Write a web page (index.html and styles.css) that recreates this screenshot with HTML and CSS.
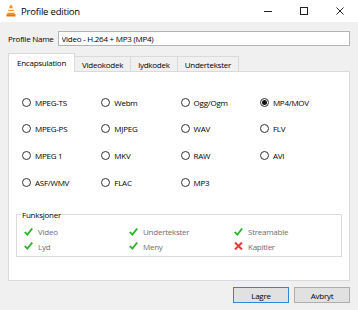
FILE: index.html
```html
<!DOCTYPE html>
<html lang="no">
<head>
    <meta charset="UTF-8">
    <title>Profile edition</title>
    <link rel="stylesheet" href="styles.css">
</head>
<body>
    <div class="titlebar">
        <svg class="app-icon" viewBox="0 0 10 12">
            <path d="M4 0.3h2l3 9.2h-8z" fill="#f7931e"/>
            <path d="M3.1 3.2h3.8l0.6 1.8h-5z M2.2 6h5.6l0.6 1.8h-6.8z" fill="#fff"/>
            <path d="M0.3 9.2h9.4l-0.4 2.4h-8.6z" fill="#e8730c"/>
        </svg>
        <span class="title">Profile edition</span>
        <div class="controls">
            <span class="ctl"><svg width="8" height="8"><path d="M0 4.5H8" stroke="#222"/></svg></span>
            <span class="ctl"><svg width="8" height="8"><rect x="0.5" y="0.5" width="7" height="7" fill="none" stroke="#222"/></svg></span>
            <span class="ctl"><svg width="8" height="8"><path d="M0.5 0.5L7.5 7.5M7.5 0.5L0.5 7.5" stroke="#222"/></svg></span>
        </div>
    </div>

    <div class="content">
        <div class="name-row">
            <label for="profile-name">Profile Name</label>
            <input id="profile-name" class="name-input" type="text" value="Video - H.264 + MP3 (MP4)">
        </div>

        <div class="tab-strip">
            <div class="tab active">Encapsulation</div>
            <div class="tab">Videokodek</div>
            <div class="tab">lydkodek</div>
            <div class="tab">Undertekster</div>
        </div>

        <div class="tab-panel">
            <div class="formats">
                <label class="opt"><input type="radio" name="fmt"> MPEG-TS</label>
                <label class="opt"><input type="radio" name="fmt"> Webm</label>
                <label class="opt"><input type="radio" name="fmt"> Ogg/Ogm</label>
                <label class="opt"><input type="radio" name="fmt" checked> MP4/MOV</label>
                <label class="opt"><input type="radio" name="fmt"> MPEG-PS</label>
                <label class="opt"><input type="radio" name="fmt"> MJPEG</label>
                <label class="opt"><input type="radio" name="fmt"> WAV</label>
                <label class="opt"><input type="radio" name="fmt"> FLV</label>
                <label class="opt"><input type="radio" name="fmt"> MPEG 1</label>
                <label class="opt"><input type="radio" name="fmt"> MKV</label>
                <label class="opt"><input type="radio" name="fmt"> RAW</label>
                <label class="opt"><input type="radio" name="fmt"> AVI</label>
                <label class="opt"><input type="radio" name="fmt"> ASF/WMV</label>
                <label class="opt"><input type="radio" name="fmt"> FLAC</label>
                <label class="opt"><input type="radio" name="fmt"> MP3</label>
            </div>

            <fieldset class="features">
                <legend>Funksjoner</legend>
                <div class="feature-grid">
                    <span class="feat"><svg class="ok" viewBox="0 0 9 8"><path d="M0 4.4L1.7 3.4L3.2 5.3L7.5 0L9 0.9L3.4 7.9Z"/></svg>Video</span>
                    <span class="feat"><svg class="ok" viewBox="0 0 9 8"><path d="M0 4.4L1.7 3.4L3.2 5.3L7.5 0L9 0.9L3.4 7.9Z"/></svg>Undertekster</span>
                    <span class="feat"><svg class="ok" viewBox="0 0 9 8"><path d="M0 4.4L1.7 3.4L3.2 5.3L7.5 0L9 0.9L3.4 7.9Z"/></svg>Streamable</span>
                    <span class="feat"><svg class="ok" viewBox="0 0 9 8"><path d="M0 4.4L1.7 3.4L3.2 5.3L7.5 0L9 0.9L3.4 7.9Z"/></svg>Lyd</span>
                    <span class="feat"><svg class="ok" viewBox="0 0 9 8"><path d="M0 4.4L1.7 3.4L3.2 5.3L7.5 0L9 0.9L3.4 7.9Z"/></svg>Meny</span>
                    <span class="feat"><svg class="no" viewBox="0 0 9 8"><path d="M1 0.5L8 7.5M8 0.5L1 7.5"/></svg>Kapitler</span>
                </div>
            </fieldset>
        </div>

        <div class="buttons">
            <button class="btn default">Lagre</button>
            <button class="btn">Avbryt</button>
        </div>
    </div>
</body>
</html>
```

FILE: styles.css
```css
* {
    box-sizing: border-box;
    margin: 0;
    padding: 0;
}

body {
    width: 358px;
    height: 310px;
    overflow: hidden;
    background: #f0f0f0;
    color: #000;
    font-family: 'Open Sans', 'Noto Sans', sans-serif;
    font-size: 8px;
    letter-spacing: -0.25px;
}

/* title bar */
.titlebar {
    height: 22px;
    background: #fff;
    display: flex;
    align-items: center;
}

.app-icon {
    width: 10px;
    height: 12px;
    margin: 0 5px 0 6px;
}

.title {
    flex: 1;
    font-size: 9.5px;
    letter-spacing: -0.2px;
}

.controls {
    display: flex;
    height: 100%;
}

.ctl {
    width: 36px;
    display: flex;
    align-items: center;
    justify-content: center;
}

.ctl svg {
    display: block;
}

/* dialog */
.content {
    padding: 0 8px;
}

.name-row {
    display: flex;
    align-items: center;
    gap: 4px;
    margin-top: 9px;
}

.name-input {
    flex: 1;
    height: 15px;
    padding: 0 3px;
    border: 1px solid #b4b4b4;
    background: #fff;
    font: inherit;
    letter-spacing: inherit;
    color: #000;
    outline: none;
}

.tab-strip {
    display: flex;
    align-items: flex-end;
    height: 18px;
    margin-top: 7px;
}

.tab {
    height: 15px;
    padding: 0 7px;
    display: flex;
    align-items: center;
    background: #f0f0f0;
    border: 1px solid #dadada;
    border-left: none;
    border-bottom: none;
}

.tab.active {
    height: 19px;
    margin-bottom: -1px;
    padding: 0 8px 1px;
    background: #fff;
    border-left: 1px solid #dadada;
    position: relative;
}

.tab-panel {
    height: 210px;
    padding: 17px 7px 0;
    background: #fff;
    border: 1px solid #dadada;
}

.formats {
    display: grid;
    grid-template-columns: repeat(4, 79.3px);
    grid-auto-rows: 26.6px;
    padding-left: 6px;
}

.opt {
    display: flex;
    align-items: center;
    gap: 4px;
}

.opt input {
    appearance: none;
    width: 9px;
    height: 9px;
    border: 1px solid #333;
    border-radius: 50%;
    background: #fff;
    display: grid;
    place-content: center;
}

.opt input:checked::after {
    content: '';
    width: 5px;
    height: 5px;
    border-radius: 50%;
    background: #111;
}

.features {
    margin-top: 14px;
    padding: 0 0 3px;
    border: 1px solid #dcdcdc;
}

.features legend {
    margin-left: 4px;
    padding: 0 1px;
    line-height: 11px;
}

.feature-grid {
    display: grid;
    grid-template-columns: repeat(3, 105px);
    grid-auto-rows: 14.5px;
    padding: 4px 0 0 7px;
}

.feat {
    display: flex;
    align-items: center;
    gap: 5px;
    color: #6e6e6e;
}

.feat svg {
    width: 9px;
    height: 8px;
}

.ok path {
    fill: #2cb52c;
}

.no path {
    fill: none;
    stroke: #e03a3a;
    stroke-width: 2;
}

.buttons {
    display: flex;
    justify-content: flex-end;
    gap: 5px;
    margin-top: 6px;
}

.btn {
    width: 56px;
    height: 16px;
    background: #e1e1e1;
    border: 1px solid #adadad;
    font: inherit;
    letter-spacing: inherit;
    color: #000;
}

.btn.default {
    border-color: #2f85d6;
}
```
